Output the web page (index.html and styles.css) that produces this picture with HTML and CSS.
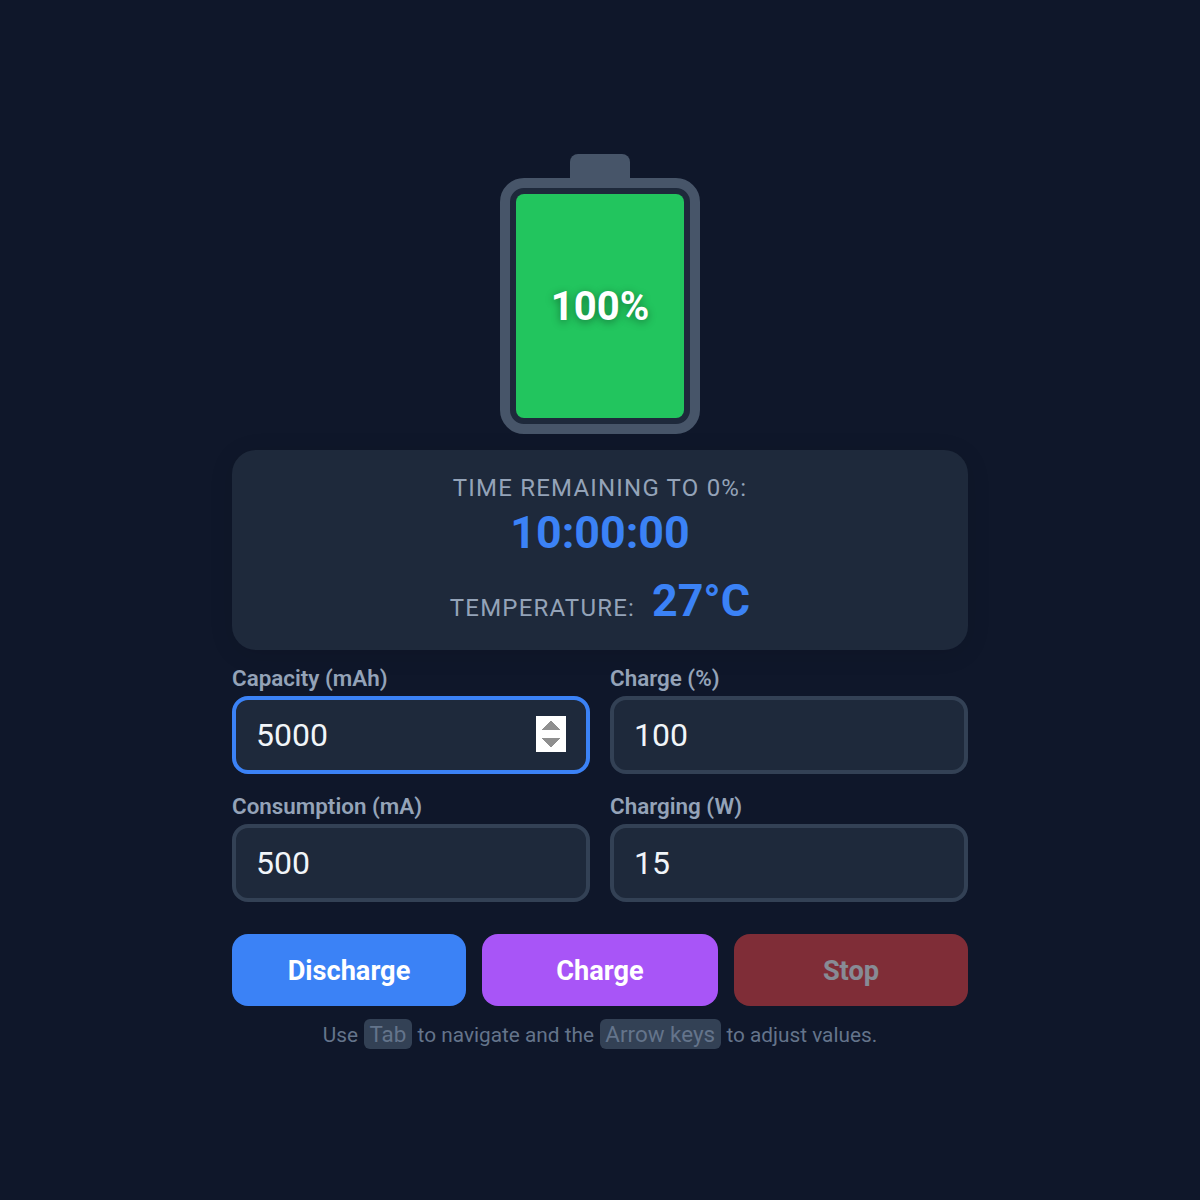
FILE: index.html
```html
<!DOCTYPE html>
<html lang="en">
<head>
<meta charset="utf-8">
<title>Battery Simulator</title>
<link rel="stylesheet" href="styles.css">
</head>
<body>
<main class="app">
  <div class="battery">
    <div class="battery-cap"></div>
    <div class="battery-body">
      <div class="battery-fill">100%</div>
    </div>
  </div>
  <section class="status">
    <div class="status-label">Time remaining to 0%:</div>
    <div class="status-time">10:00:00</div>
    <div class="status-temp">
      <span class="status-label">Temperature:</span>
      <span class="status-value">27°C</span>
    </div>
  </section>
  <section class="fields">
    <label class="field"><span class="field-label">Capacity (mAh)</span><input class="field-input" type="number" value="5000" autofocus></label>
    <label class="field"><span class="field-label">Charge (%)</span><input class="field-input" type="number" value="100"></label>
    <label class="field"><span class="field-label">Consumption (mA)</span><input class="field-input" type="number" value="500"></label>
    <label class="field"><span class="field-label">Charging (W)</span><input class="field-input" type="number" value="15"></label>
  </section>
  <div class="actions">
    <button class="btn btn-discharge" type="button">Discharge</button>
    <button class="btn btn-charge" type="button">Charge</button>
    <button class="btn btn-stop" type="button" disabled>Stop</button>
  </div>
  <p class="hint">Use <kbd class="key">Tab</kbd> to navigate and the <kbd class="key">Arrow keys</kbd> to adjust values.</p>
</main>
</body>
</html>
```
FILE: styles.css
```css
* { box-sizing: border-box; }
html, body { height: 100%; }
body {
  margin: 0;
  background: #0f172a;
  font-family: Roboto, "Liberation Sans", sans-serif;
  color: #f1f5f9;
  display: flex;
  align-items: center;
  justify-content: center;
}
.app {
  width: 736px;
  display: flex;
  flex-direction: column;
  align-items: stretch;
  padding-top: 4px;
}
.battery {
  align-self: center;
  display: flex;
  flex-direction: column;
  align-items: center;
  margin-bottom: 16px;
}
.battery-cap {
  width: 60px;
  height: 24px;
  background: #475569;
  border-radius: 8px 8px 0 0;
}
.battery-body {
  width: 200px;
  height: 256px;
  border: 10px solid #475569;
  border-radius: 24px;
  background: #1e293b;
  padding: 6px;
}
.battery-fill {
  height: 100%;
  padding-top: 2px;
  background: #22c55e;
  border-radius: 8px;
  display: flex;
  align-items: center;
  justify-content: center;
  color: #fff;
  font-size: 40px;
  font-weight: 700;
  text-shadow: 0 2px 8px rgba(0, 0, 0, 0.4);
}
.status {
  height: 200px;
  background: #1e293b;
  border-radius: 24px;
  padding-top: 24px;
  text-align: center;
  box-shadow: 0 4px 24px rgba(0, 0, 0, 0.1);
  margin-bottom: 16px;
}
.status-label {
  font-size: 24px;
  line-height: 28px;
  letter-spacing: 0.05em;
  text-transform: uppercase;
  color: #94a3b8;
}
.status-time, .status-value {
  font-size: 44.8px;
  line-height: 56px;
  font-weight: 700;
  color: #3b82f6;
}
.status-time { margin-top: 3px; }
.status-temp { margin-top: 12px; }
.status-value { margin-left: 13px; }
.fields {
  display: grid;
  grid-template-columns: 1fr 1fr;
  gap: 20px;
  margin-bottom: 32px;
}
.field { display: flex; flex-direction: column; gap: 6px; }
.field-label {
  font-size: 22.4px;
  line-height: 24px;
  font-weight: 600;
  color: #94a3b8;
}
.field-input {
  width: 100%;
  height: 78px;
  border: 4px solid #334155;
  border-radius: 16px;
  background: #1e293b;
  color: #f1f5f9;
  font: 400 32px Roboto, sans-serif;
  padding: 0 20px;
  outline: none;
}
.field-input:focus { border-color: #3b82f6; }
.field-input::-webkit-inner-spin-button {
  appearance: none;
  opacity: 0;
  width: 30px;
  height: 36px;
  margin-bottom: 2px;
  background-color: #fff;
  background-repeat: no-repeat;
  background-size: 10px 9px;
  background-position: 5px 5px, 15px 5px, 5px 22px, 15px 22px;
  background-image:
    linear-gradient(to bottom right, transparent 50%, #8f8f8f 50%),
    linear-gradient(to bottom left, transparent 50%, #8f8f8f 50%),
    linear-gradient(to top right, transparent 50%, #8f8f8f 50%),
    linear-gradient(to top left, transparent 50%, #8f8f8f 50%);
}
.field-input:focus::-webkit-inner-spin-button { opacity: 1; }
.actions {
  display: grid;
  grid-template-columns: 1fr 236px 1fr;
  gap: 16px;
  margin-bottom: 13px;
}
.btn {
  height: 72px;
  padding: 2px 0 0;
  border: 0;
  border-radius: 16px;
  color: #fff;
  font: 700 27.2px Roboto, sans-serif;
}
.btn-discharge { background: #3b82f6; }
.btn-charge { background: #a855f7; }
.btn-stop { background: #ef4444; opacity: 0.5; }
.hint {
  margin: 0;
  padding-bottom: 1px;
  text-align: center;
  font-size: 20.8px;
  line-height: 30px;
  color: #64748b;
}
.key {
  font: inherit;
  font-size: 22.4px;
  background: #334155;
  border-radius: 6px;
  padding: 2px 5.6px;
  margin: 0 0.6px;
}
```
